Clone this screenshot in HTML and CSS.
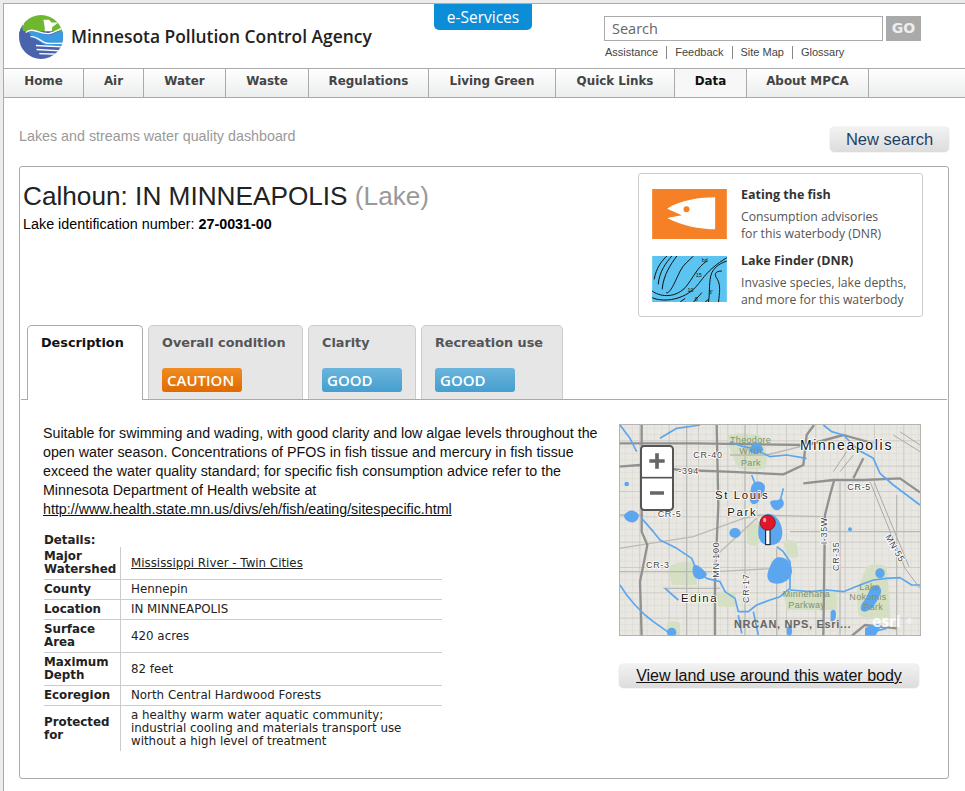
FILE: index.html
```html
<!DOCTYPE html>
<html>
  <head>
    <title>Lakes and streams water quality dashboard</title>
    <link rel="stylesheet" href="styles.css">
  </head>
  <body>
    <div class="page">
      <header class="top">
        <a class="brand" href="#">
          <svg class="logo" viewBox="58 44 130 130">
            <defs>
              <clipPath id="logo-clip"><circle cx="123" cy="109" r="65"/></clipPath>
            </defs>
            <g clip-path="url(#logo-clip)">
              <rect x="58" y="44" width="130" height="60" fill="#6fb72e"/>
              <path fill="#fff" d="M58 44H80L72 72C66 82 62 88 58 92Z"/>
              <path fill="#fff" d="M130 58H147L154 66L174 66L156 80L154 100L134 100L134 80Z"/>
              <rect x="58" y="92" width="130" height="82" fill="#4a63ad"/>
              <path fill="#4a63ad" d="M58 80L70 72C66 82 68 90 74 96L58 100Z"/>
              <path fill="#3c9be0" d="M86 92C110 84 130 106 150 102C165 98 178 90 190 86V136H140L105 114C95 108 88 100 86 92Z"/>
              <path class="logo-wave" d="M78 96C98 76 125 106 150 98C165 94 175 86 190 82"/>
              <path class="logo-wave" d="M92 108C115 106 125 128 145 128H190"/>
              <path class="logo-wave" d="M108 134L186 138M110 146L182 150M118 158L172 160"/>
            </g>
          </svg>
          <span class="brand-name">Minnesota Pollution Control Agency</span>
        </a>
        <a class="eservices" href="#">e-Services</a>
        <div class="search">
          <div class="search-row">
            <div class="search-input">Search</div>
            <div class="search-go">GO</div>
          </div>
          <ul class="util-links">
            <li><a href="#">Assistance</a></li>
            <li><a href="#">Feedback</a></li>
            <li><a href="#">Site Map</a></li>
            <li><a href="#">Glossary</a></li>
          </ul>
        </div>
      </header>

      <nav class="nav">
        <a class="nav-home" href="#">Home</a>
        <a class="nav-air" href="#">Air</a>
        <a class="nav-water" href="#">Water</a>
        <a class="nav-waste" href="#">Waste</a>
        <a class="nav-reg" href="#">Regulations</a>
        <a class="nav-green" href="#">Living Green</a>
        <a class="nav-quick" href="#">Quick Links</a>
        <a class="nav-data active" href="#">Data</a>
        <a class="nav-about" href="#">About MPCA</a>
      </nav>

      <main class="main">
        <div class="title-row">
          <h2 class="dash-title">Lakes and streams water quality dashboard</h2>
          <a class="btn btn-new" href="#">New search</a>
        </div>

        <section class="panel">
          <div class="panel-head">
            <div class="lake-info">
              <h1 class="lake-name">Calhoun: IN MINNEAPOLIS <span class="lake-type">(Lake)</span></h1>
              <p class="lake-id">Lake identification number: <b>27-0031-00</b></p>
            </div>
            <div class="links-box">
              <div class="link-item">
                <svg class="link-img" viewBox="66 71 224 150">
                  <rect x="66" y="71" width="224" height="150" fill="#f58025"/>
                  <path fill="#fff" d="M255 96C210 96 150 104 111 130L155 150L111 158C150 180 210 192 255 192Z"/>
                  <circle cx="169" cy="132" r="9" fill="#f58025"/>
                </svg>
                <div class="link-text">
                  <h4>Eating the fish</h4>
                  <p>Consumption advisories<br>for this waterbody (DNR)</p>
                </div>
              </div>
              <div class="link-item">
                <svg class="link-img" viewBox="66 275 224 138">
                  <rect x="66" y="275" width="224" height="138" fill="#5cc4f0"/>
                  <g class="contour">
                    <path d="M72 345C78 310 95 290 110 275"/>
                    <path d="M84 360C88 320 108 295 125 275"/>
                    <path d="M96 375C100 330 122 300 140 275"/>
                    <path d="M108 385C120 390 135 350 150 320C160 300 175 290 190 275"/>
                    <path d="M66 380C85 395 130 405 165 370C190 340 200 310 230 290"/>
                    <path d="M66 400C95 413 150 410 190 375C220 345 225 320 290 280"/>
                    <path d="M235 413C240 380 235 350 245 325C255 305 275 295 290 290"/>
                    <path d="M265 413C268 385 272 365 262 345C250 330 255 320 275 320"/>
                    <path d="M190 413L215 385M150 413L165 402M225 413L235 405"/>
                  </g>
                  <text class="contour-num" x="215" y="292">bd</text>
                  <text class="contour-num" x="197" y="338">15</text>
                  <text class="contour-num" x="172" y="382">10</text>
                  <text class="contour-num" x="236" y="388">3'</text>
                  <text class="contour-num" x="194" y="410">8</text>
                </svg>
                <div class="link-text">
                  <h4>Lake Finder (DNR)</h4>
                  <p>Invasive species, lake depths,<br>and more for this waterbody</p>
                </div>
              </div>
            </div>
          </div>

          <div class="tabs">
            <div class="tab active"><span class="tab-name">Description</span></div>
            <div class="tab tab-overall"><span class="tab-name">Overall condition</span><span class="badge caution">CAUTION</span></div>
            <div class="tab tab-clarity"><span class="tab-name">Clarity</span><span class="badge good">GOOD</span></div>
            <div class="tab tab-rec"><span class="tab-name">Recreation use</span><span class="badge good">GOOD</span></div>
          </div>

          <div class="tab-body">
            <div class="desc">
              <p class="summary">Suitable for swimming and wading, with good clarity and low algae levels throughout the open water season. Concentrations of PFOS in fish tissue and mercury in fish tissue exceed the water quality standard; for specific fish consumption advice refer to the Minnesota Department of Health website at <a href="#">http://www.health.state.mn.us/divs/eh/fish/eating/sitespecific.html</a></p>
              <div class="details-label">Details:</div>
              <table class="details">
                <tr class="row-tall"><th>Major Watershed</th><td><a href="#">Mississippi River - Twin Cities</a></td></tr>
                <tr><th>County</th><td>Hennepin</td></tr>
                <tr><th>Location</th><td>IN MINNEAPOLIS</td></tr>
                <tr class="row-tall"><th>Surface Area</th><td>420 acres</td></tr>
                <tr class="row-tall"><th>Maximum Depth</th><td>82 feet</td></tr>
                <tr><th>Ecoregion</th><td>North Central Hardwood Forests</td></tr>
                <tr><th>Protected for</th><td>a healthy warm water aquatic community;<br>industrial cooling and materials transport use<br>without a high level of treatment</td></tr>
              </table>
            </div>

            <div class="side">
              <svg class="map" viewBox="27 27 906 636">
                <defs>
                  <pattern id="streets" width="22" height="19" patternUnits="userSpaceOnUse">
                    <path d="M0 0H22M0 0V19" stroke="#d2d0c9" stroke-width="2" fill="none"/>
                  </pattern>
                  <pattern id="blocks" width="88" height="76" patternUnits="userSpaceOnUse">
                    <path d="M0 0H88M0 0V76" stroke="#bdbbb5" stroke-width="3" fill="none"/>
                  </pattern>
                </defs>
                <rect x="27" y="27" width="906" height="636" fill="#e9e7e1"/>
                <rect x="27" y="27" width="906" height="636" fill="url(#streets)"/>
                <rect x="27" y="27" width="906" height="636" fill="url(#blocks)"/>
                <g class="park">
                  <path d="M350 60C390 50 450 55 460 70C470 110 475 140 465 160C430 165 400 165 385 160C370 130 355 95 350 60Z"/>
                  <path d="M410 335C425 325 440 320 450 320L445 390C430 395 415 390 412 380Z"/>
                  <path d="M520 380C535 372 555 375 560 385L565 425C550 430 535 428 530 420Z"/>
                  <path d="M175 455C200 440 235 438 250 445L262 510L185 510Z"/>
                  <path d="M320 535C340 525 365 528 375 535L380 575H325Z"/>
                  <path d="M770 455C790 445 820 448 830 455L842 610C810 615 770 612 745 600L740 530Z"/>
                  <path d="M520 530H680V585H530Z"/>
                  <path d="M170 625C180 618 200 618 210 625V663H170Z"/>
                </g>
                <g class="road-thin">
                  <path d="M27 400L250 365L400 310L450 300L640 305"/>
                  <path d="M230 30V663M405 30V663M500 400V663M860 240V663"/>
                  <path d="M27 470H320L500 460M160 520H330M540 350H930M690 200V663"/>
                  <path d="M320 420L440 310M27 300H100M360 120L470 120L590 90"/>
                </g>
                <g class="road-mid">
                  <path d="M780 200L885 460L930 520"/>
                  <path d="M792 200L897 455"/>
                  <path d="M670 170L710 110M690 170L730 120M850 60L930 110M870 50L930 90"/>
                </g>
                <g class="road">
                  <path d="M27 155L90 150L210 165L350 170L520 178L580 150L590 60L612 30"/>
                  <path d="M320 30L325 270L315 500V663"/>
                  <path d="M640 663L645 300L660 240L672 198"/>
                  <path d="M580 205L670 195L760 195L870 190L930 232"/>
                  <path d="M95 30V350L112 390L90 500L95 663"/>
                  <path d="M27 85H250L590 90L700 60L790 85"/>
                  <path d="M730 190L760 130"/>
                  <path d="M725 663L765 630L860 640"/>
                </g>
                <g class="stream">
                  <path d="M640 30L665 50L700 60L745 105L790 130L810 175L850 210L930 270"/>
                  <path d="M30 30L60 70L70 90L80 110"/>
                  <path d="M150 70L200 40L270 30M360 80L400 95L430 100L480 125L530 120L590 130"/>
                  <path d="M500 395L520 410L540 440L540 520L510 545L480 555L440 570L415 590L385 590L375 550L345 530L330 500L290 490L260 465L245 430L200 400L150 375L130 350L95 310"/>
                  <path d="M540 525L600 530L650 525L700 530L750 510L790 495L830 490L870 488L905 510L930 510"/>
                  <path d="M30 510L50 540L75 570L105 600L130 620L180 655"/>
                  <path d="M165 520L205 555M520 220L510 260M425 180L435 205M830 640L790 650"/>
                  <path d="M385 600L395 655M430 590L445 660"/>
                </g>
                <g class="lake">
                  <path d="M470 297C495 292 515 320 517 350C518 375 505 392 480 390C455 392 443 375 445 345C446 320 455 300 470 297Z"/>
                  <path d="M505 427C530 425 547 445 546 470C544 495 515 510 490 505C470 500 468 480 478 460C484 445 490 430 505 427Z"/>
                  <path d="M430 205C445 195 460 200 465 215C465 235 455 245 445 260C435 272 418 270 420 250C422 235 420 215 430 205Z"/>
                  <path d="M480 262C490 250 500 262 512 250C525 258 525 275 510 282C500 290 485 285 480 262Z"/>
                  <ellipse cx="375" cy="354" rx="17" ry="15"/>
                  <path d="M42 300C55 285 70 280 85 298C90 312 75 325 62 322C50 318 42 312 42 300Z"/>
                  <path d="M250 452C262 445 275 460 290 475C292 490 270 497 258 490C248 482 245 465 250 452Z"/>
                  <ellipse cx="810" cy="475" rx="14" ry="15"/>
                  <path d="M790 512C805 508 818 520 812 535C800 560 790 585 765 590C750 590 748 575 760 560C775 545 775 520 790 512Z"/>
                  <path d="M662 590C670 578 680 585 678 600C678 612 672 622 662 618Z"/>
                  <path d="M765 640C780 630 805 622 812 632C808 645 800 655 795 663H765Z"/>
                  <ellipse cx="185" cy="652" rx="14" ry="14"/>
                  <ellipse cx="538" cy="648" rx="8" ry="15"/>
                  <path d="M430 85C440 78 455 85 460 105C450 118 430 122 418 108C418 98 425 92 430 85Z"/>
                  <circle cx="50" cy="207" r="7"/>
                  <circle cx="720" cy="343" r="6"/>
                </g>
                <g class="label-road">
                  <text x="250" y="128">CR-40</text>
                  <text x="205" y="176">-394</text>
                  <text x="143" y="307">CR-5</text>
                  <text x="712" y="225">CR-5</text>
                  <text x="108" y="459">CR-3</text>
                  <text transform="rotate(-90 652 388)" x="652" y="388">I-35W</text>
                  <text transform="rotate(-90 327 488)" x="327" y="488">MN-100</text>
                  <text transform="rotate(-90 416 564)" x="416" y="564">CR-17</text>
                  <text transform="rotate(-90 686 468)" x="686" y="468">CR-35</text>
                  <text transform="rotate(60 825 365)" x="825" y="365">MN-55</text>
                </g>
                <g class="label-park">
                  <text x="360" y="83">Theodore</text>
                  <text x="388" y="118">Wirth</text>
                  <text x="393" y="152">Park</text>
                  <text x="518" y="546">Minnehaha</text>
                  <text x="535" y="578">Parkway</text>
                  <text x="748" y="525">Lake</text>
                  <text x="718" y="555">Nokomis</text>
                  <text x="760" y="584">Park</text>
                </g>
                <g class="label-city">
                  <text class="label-big" x="570" y="106">Minneapolis</text>
                  <text x="315" y="253">St Louis</text>
                  <text x="352" y="302">Park</text>
                  <text x="213" y="560">Edina</text>
                </g>
                <text class="map-credit" x="372" y="638">NRCAN, NPS, Esri...</text>
                <text class="map-esri" x="787" y="636">esri</text>
                <text class="map-reg" x="890" y="628">®</text>
                <g class="zoom-ctl">
                  <rect x="93" y="93" width="96" height="192" rx="10"/>
                  <path d="M93 188H189"/>
                </g>
                <path class="zoom-sign" d="M141 115V161M118 138H164M120 234H162"/>
                <rect class="pin-stem" x="467" y="340" width="13" height="49"/>
                <circle class="pin-head" cx="473" cy="323" r="23"/>
                <ellipse cx="464" cy="315" rx="5" ry="7" fill="#ff9aa5"/>
                <rect class="map-frame" x="27" y="27" width="906" height="636"/>
              </svg>
              <a class="btn btn-land" href="#">View land use around this water body</a>
            </div>
          </div>
        </section>
      </main>
    </div>
  </body>
</html>
```

FILE: styles.css
```css
html, body { margin: 0; padding: 0; background: #ececec; }
body { font-family: "Liberation Sans", Arial, sans-serif; color: #000; }
a { color: inherit; text-decoration: none; }

.page { border-top: 1px solid #aaa; border-left: 1px solid #aaa; margin: 3px 0 0 3px; height: 788px; overflow: hidden; background: #fff; }

.top { display: flex; height: 64px; }
.brand { display: flex; width: 430px; padding: 11px 0 0 15px; box-sizing: border-box; }
.logo { width: 44px; height: 44px; }
.logo-wave { fill: none; stroke: #fff; stroke-width: 4; }
.brand-name { margin: 9px 0 0 8px; font: 600 17.4px "Open Sans", sans-serif; color: #222; white-space: nowrap; }

.eservices { width: 98px; height: 26px; background: #0b8dd8; color: #fff; text-align: center; border-radius: 0 0 5px 5px; font: 15.5px/27px "Open Sans", sans-serif; }

.search { margin: 12px 0 0 72px; width: 317px; }
.search-row { display: flex; gap: 3px; }
.search-input { height: 23px; border: 1px solid #aaa; padding-left: 7px; width: 271px; font: 14.5px/23px "Open Sans", sans-serif; color: #666; }
.search-go { width: 35px; height: 25px; background: #aaa; color: #eee; text-align: center; font: bold 14px/25px "DejaVu Sans", sans-serif; }
.util-links { list-style: none; display: flex; margin: 5px 0 0 1px; padding: 0; font-size: 11px; line-height: 13px; color: #444; }
.util-links li { padding-right: 8px; margin-right: 8px; border-right: 1px solid #888; }
.util-links li:last-child { border: 0; margin: 0; padding: 0; }

.nav { display: flex; height: 28px; border-top: 1px solid #aaa; border-bottom: 1px solid #aaa; background: linear-gradient(#fff, #eceded); font: bold 11.9px/24px "DejaVu Sans", Verdana, sans-serif; color: #444; }
.nav a { border-right: 1px solid #aaa; text-align: center; box-sizing: border-box; }
.nav .active { color: #111; background: #f7f7f7; }
.nav-home { width: 80px; }
.nav-air { width: 60px; }
.nav-water { width: 82px; }
.nav-waste { width: 83px; }
.nav-reg { width: 120px; }
.nav-green { width: 127px; }
.nav-quick { width: 119px; }
.nav-data { width: 72px; }
.nav-about { width: 122px; }

.main { padding: 0 0 0 15px; }
.title-row { display: flex; justify-content: space-between; height: 68px; padding: 29px 16px 0 0; box-sizing: border-box; }
.dash-title { margin: 1px 0 0; font-size: 14.3px; font-weight: normal; line-height: 16px; color: #999; }
.btn { display: block; text-align: center; border-radius: 5px; background: linear-gradient(#f2f2f2, #dcdcdc); box-shadow: 0 0 1px #999; }
.btn-new { width: 119px; height: 25px; font-size: 16.5px; line-height: 25px; color: #1d3f66; }

.panel { width: 930px; height: 613px; box-sizing: border-box; border: 1px solid #aaa; border-radius: 3px; }
.panel-head { display: flex; justify-content: space-between; height: 158px; padding: 6px 25px 0 3px; box-sizing: border-box; }
.lake-name { margin: 8px 0 0; font-size: 26.2px; font-weight: normal; line-height: 30px; color: #222; }
.lake-type { color: #999; }
.lake-id { margin: 3px 0 0; font-size: 14.35px; line-height: 20px; }

.links-box { width: 285px; height: 144px; box-sizing: border-box; border: 1px solid #ccc; border-radius: 3px; padding: 15px 0 0 13px; }
.link-item { display: flex; margin-bottom: 13px; }
.link-img { width: 75px; height: 50px; flex: none; }
.link-item + .link-item .link-img { height: 46px; margin-top: 1px; }
.link-text { margin: -2px 0 0 14px; font-family: "Open Sans", sans-serif; color: #555; }
.link-text h4 { margin: 0 0 6px; font-size: 12.5px; line-height: 16px; color: #333; }
.link-text p { margin: 0; font-size: 12.2px; line-height: 16.5px; }
.contour { fill: none; stroke: #111; stroke-width: 3; }
.contour-num { font: 16px "Liberation Sans", sans-serif; fill: #111; }

.tabs { display: flex; align-items: flex-start; gap: 5px; height: 75px; margin: 0 1px; padding-left: 6px; border-bottom: 1px solid #aaa; box-sizing: border-box; }
.tab { width: 116px; height: 74px; box-sizing: border-box; border: 1px solid #ccc; border-bottom: 0; border-radius: 5px 5px 0 0; background: #e6e6e6; padding: 8px 13px 0; font: bold 12.8px/17px "DejaVu Sans", Verdana, sans-serif; color: #555; }
.tab.active { background: #fff; border-color: #aaa; color: #111; height: 75px; }
.tab-overall { width: 155px; }
.tab-clarity { width: 108px; }
.tab-rec { width: 142px; }
.tab-name { display: block; white-space: nowrap; }
.badge { display: block; width: 80px; height: 24px; margin-top: 17px; padding-left: 5px; box-sizing: border-box; border-radius: 3px; color: #fff; font: 600 15px/24px "Open Sans", sans-serif; }
.caution { background: linear-gradient(#f08c22, #e06a00); }
.good { background: linear-gradient(#6bb4dc, #459fce); }

.tab-body { display: flex; justify-content: space-between; padding: 24px 27px 0 23px; }
.desc { width: 560px; }
.summary { margin: 0; font-size: 14.26px; line-height: 19px; color: #111; }
.summary a, .details a { text-decoration: underline; }
.details-label { margin: 15px 0 0 1px; font: bold 11.85px/13px "DejaVu Sans", Verdana, sans-serif; color: #222; }
.details { border-collapse: collapse; width: 398px; margin-left: 1px; font: 11.85px/13px "DejaVu Sans", Verdana, sans-serif; color: #222; }
.details th { width: 76px; padding: 3px 0; text-align: left; border-right: 1px solid #ccc; font-weight: bold; vertical-align: middle; }
.details td { padding: 3px 0 3px 10px; }
.details tr + tr th, .details tr + tr td { border-top: 1px solid #ccc; }

.side { width: 302px; }
.map { display: block; width: 302px; height: 212px; }
.map-frame { fill: none; stroke: #aaa; stroke-width: 5; }
.park path { fill: #d5dfc3; }
.road-thin path { fill: none; stroke: #bbb9b4; stroke-width: 4; }
.road-mid path { fill: none; stroke: #aaa; stroke-width: 3; }
.road path { fill: none; stroke: #919191; stroke-width: 7; stroke-linejoin: round; }
.stream path { fill: none; stroke: #5ba6ee; stroke-width: 5; stroke-linejoin: round; }
.lake ellipse, .lake path, .lake circle { fill: #5ba6ee; }
.label-road text { font: 27px "Liberation Sans", sans-serif; letter-spacing: 2px; fill: #444; stroke: #fff; stroke-width: 5; paint-order: stroke; }
.label-park text { font: 27px "Liberation Sans", sans-serif; letter-spacing: 1px; fill: #7f9270; }
.label-city text { font: 34px "Liberation Sans", sans-serif; letter-spacing: 5px; fill: #111; stroke: #fff; stroke-width: 5; paint-order: stroke; }
.label-city .label-big { font-size: 42px; }
.map-credit { font: bold 33px "Liberation Sans", sans-serif; letter-spacing: 2px; fill: #666; }
.map-esri { font: bold 46px "Open Sans", sans-serif; fill: #fff; fill-opacity: .9; }
.map-reg { font: 24px "Liberation Sans", sans-serif; fill: #fff; }
.zoom-ctl rect { fill: #fff; stroke: #555; stroke-width: 6; }
.zoom-ctl path { stroke: #555; stroke-width: 5; fill: none; }
.zoom-sign { stroke: #666; stroke-width: 11; fill: none; }
.pin-stem { fill: #fff; stroke: #111; stroke-width: 3; }
.pin-head { fill: #e0162b; stroke: #611; stroke-width: 2; }

.btn-land { width: 300px; height: 24px; margin-top: 28px; font-size: 16px; line-height: 23px; color: #111; text-decoration: underline; }
```
